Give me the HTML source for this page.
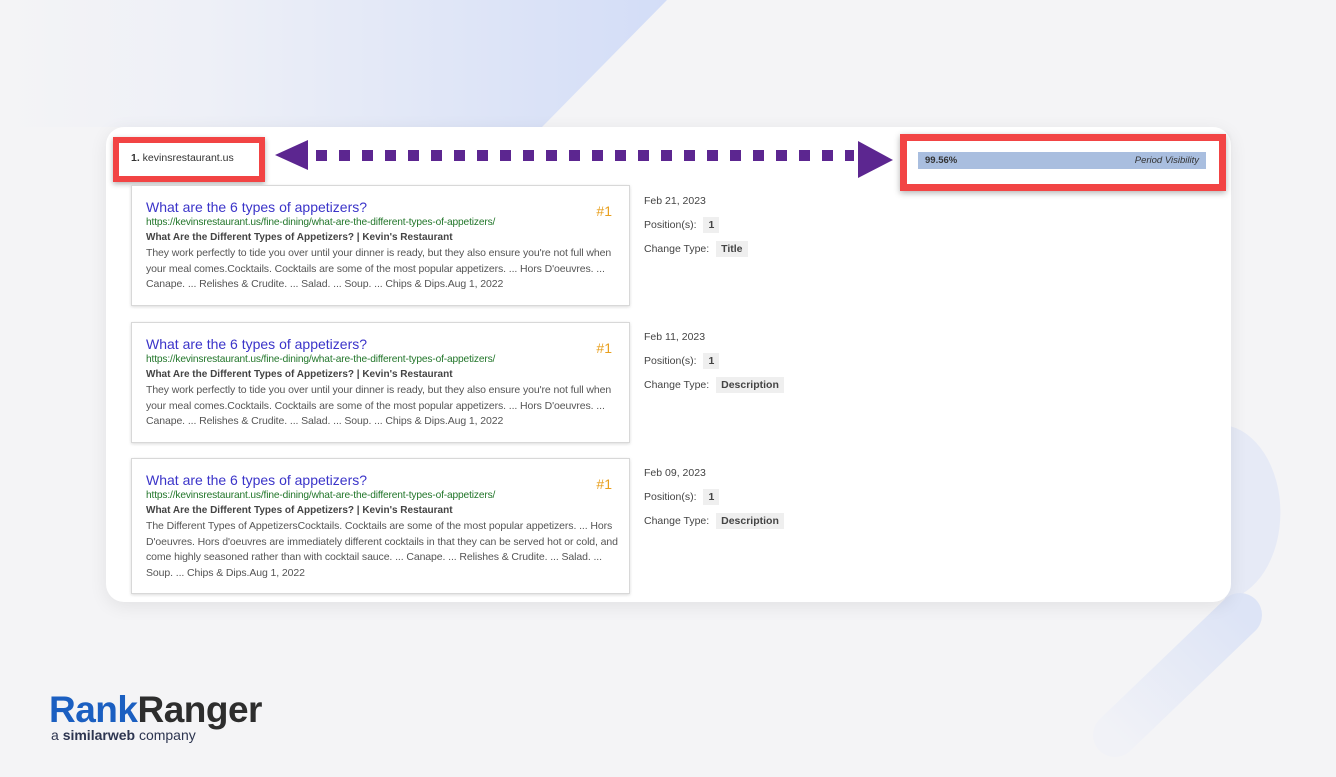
<!DOCTYPE html>
<html><head><meta charset="utf-8"><style>
*{margin:0;padding:0;box-sizing:border-box}
body{width:1336px;height:777px;overflow:hidden;background:#f4f4f6;font-family:"Liberation Sans",Arial,sans-serif;position:relative}
.abs{position:absolute}
.panel{left:106px;top:127px;width:1125px;height:475px;background:#fff;border-radius:18px;box-shadow:0 4px 18px rgba(0,0,0,.08)}
.card{position:absolute;left:131px;width:499px;background:#fff;border:1px solid #d8d8d8;box-shadow:0 1px 3px rgba(0,0,0,.15);padding:13px 6px 0 14px}
.t{color:#3b34c9;font-size:14px;line-height:17px}
.u{color:#22762a;font-size:10.2px;line-height:13px;letter-spacing:-.15px}
.h{color:#444;font-weight:bold;font-size:10px;line-height:17px}
.d{color:#555;font-size:10.5px;line-height:15.5px;letter-spacing:-.1px;white-space:nowrap}
.n{position:absolute;right:17px;top:17px;color:#e8a020;font-size:14px}
.meta{position:absolute;left:644px;font-size:10.5px;color:#444}
.meta div{height:24px;line-height:16px}
.tag{display:inline-block;background:#efefef;font-weight:bold;padding:0 5px;margin-left:4px;line-height:16px}
.sq{position:absolute;top:150px;width:11px;height:11px;background:#5c2690}
</style></head><body>
<svg class="abs" style="left:0;top:0" width="1336" height="777">
<defs>
<linearGradient id="g1" x1="0" y1="0" x2="1" y2="0"><stop offset="0" stop-color="#f4f4f6"/><stop offset="0.3" stop-color="#eef0f7"/><stop offset="1" stop-color="#d3ddf7"/></linearGradient>
<linearGradient id="g2" x1="1" y1="0" x2="0" y2="1"><stop offset="0" stop-color="#dde4f6"/><stop offset="1" stop-color="#f1f2f7"/></linearGradient>
</defs>
<polygon points="0,0 667,0 542,127 0,127" fill="url(#g1)"/>
<path d="M1225,425 A62,88 0 0 1 1225,600 Z" fill="#e6eaf6"/>
<line x1="1240" y1="615" x2="1115" y2="735" stroke="url(#g2)" stroke-width="44" stroke-linecap="round"/>
</svg>
<div class="abs panel"></div>
<div class="abs" style="left:113px;top:137px;width:152px;height:45px;border:6px solid #f24444;background:#fff;box-shadow:0 2px 5px rgba(0,0,0,.3)"></div>
<div class="abs" style="left:131px;top:152px;font-size:10.5px;color:#333"><b>1.</b> kevinsrestaurant.us</div>
<svg class="abs" style="left:270px;top:136px" width="630" height="45">
<polygon points="5,19 38,4 38,34" fill="#5c2690"/>
<polygon points="588,5 623,24 588,42" fill="#5c2690"/>
</svg>
<div class="sq" style="left:316px"></div><div class="sq" style="left:339px"></div><div class="sq" style="left:362px"></div><div class="sq" style="left:385px"></div><div class="sq" style="left:408px"></div><div class="sq" style="left:431px"></div><div class="sq" style="left:454px"></div><div class="sq" style="left:477px"></div><div class="sq" style="left:500px"></div><div class="sq" style="left:523px"></div><div class="sq" style="left:546px"></div><div class="sq" style="left:569px"></div><div class="sq" style="left:592px"></div><div class="sq" style="left:615px"></div><div class="sq" style="left:638px"></div><div class="sq" style="left:661px"></div><div class="sq" style="left:684px"></div><div class="sq" style="left:707px"></div><div class="sq" style="left:730px"></div><div class="sq" style="left:753px"></div><div class="sq" style="left:776px"></div><div class="sq" style="left:799px"></div><div class="sq" style="left:822px"></div><div class="sq" style="left:845px;width:9px"></div>
<div class="abs" style="left:900px;top:134px;width:326px;height:57px;border:7px solid #f24444;background:#fff;box-shadow:0 2px 6px rgba(0,0,0,.3)"></div>
<div class="abs" style="left:918px;top:152px;width:288px;height:17px;background:#a9bedf;font-size:9.5px;color:#333;line-height:17px;padding:0 7px"><b>99.56%</b><i style="float:right">Period Visibility</i></div>

<div class="card" style="top:185px;height:121px"><div class="n">#1</div>
<div class="t">What are the 6 types of appetizers?</div>
<div class="u">https://kevinsrestaurant.us/fine-dining/what-are-the-different-types-of-appetizers/</div>
<div class="h">What Are the Different Types of Appetizers? | Kevin's Restaurant</div>
<div class="d">They work perfectly to tide you over until your dinner is ready, but they also ensure you're not full when<br>your meal comes.Cocktails. Cocktails are some of the most popular appetizers. ... Hors D'oeuvres. ...<br>Canape. ... Relishes &amp; Crudite. ... Salad. ... Soup. ... Chips &amp; Dips.Aug 1, 2022</div></div>
<div class="card" style="top:322px;height:121px"><div class="n">#1</div>
<div class="t">What are the 6 types of appetizers?</div>
<div class="u">https://kevinsrestaurant.us/fine-dining/what-are-the-different-types-of-appetizers/</div>
<div class="h">What Are the Different Types of Appetizers? | Kevin's Restaurant</div>
<div class="d">They work perfectly to tide you over until your dinner is ready, but they also ensure you're not full when<br>your meal comes.Cocktails. Cocktails are some of the most popular appetizers. ... Hors D'oeuvres. ...<br>Canape. ... Relishes &amp; Crudite. ... Salad. ... Soup. ... Chips &amp; Dips.Aug 1, 2022</div></div>
<div class="card" style="top:458px;height:136px"><div class="n">#1</div>
<div class="t">What are the 6 types of appetizers?</div>
<div class="u">https://kevinsrestaurant.us/fine-dining/what-are-the-different-types-of-appetizers/</div>
<div class="h">What Are the Different Types of Appetizers? | Kevin's Restaurant</div>
<div class="d">The Different Types of AppetizersCocktails. Cocktails are some of the most popular appetizers. ... Hors<br>D'oeuvres. Hors d'oeuvres are immediately different cocktails in that they can be served hot or cold, and<br>come highly seasoned rather than with cocktail sauce. ... Canape. ... Relishes &amp; Crudite. ... Salad. ...<br>Soup. ... Chips &amp; Dips.Aug 1, 2022</div></div>

<div class="meta" style="top:193px"><div>Feb 21, 2023</div><div>Position(s): <span class="tag">1</span></div><div>Change Type: <span class="tag">Title</span></div></div>
<div class="meta" style="top:329px"><div>Feb 11, 2023</div><div>Position(s): <span class="tag">1</span></div><div>Change Type: <span class="tag">Description</span></div></div>
<div class="meta" style="top:465px"><div>Feb 09, 2023</div><div>Position(s): <span class="tag">1</span></div><div>Change Type: <span class="tag">Description</span></div></div>

<div class="abs" style="left:49px;top:691px;font-size:37px;font-weight:bold;letter-spacing:-.5px;line-height:38px"><span style="color:#1b5fc1">Rank</span><span style="color:#2d2d2d">Ranger</span></div>
<div class="abs" style="left:51px;top:727px;font-size:14px;color:#2d3550;line-height:16px">a <b>similarweb</b> company</div>
</body></html>
